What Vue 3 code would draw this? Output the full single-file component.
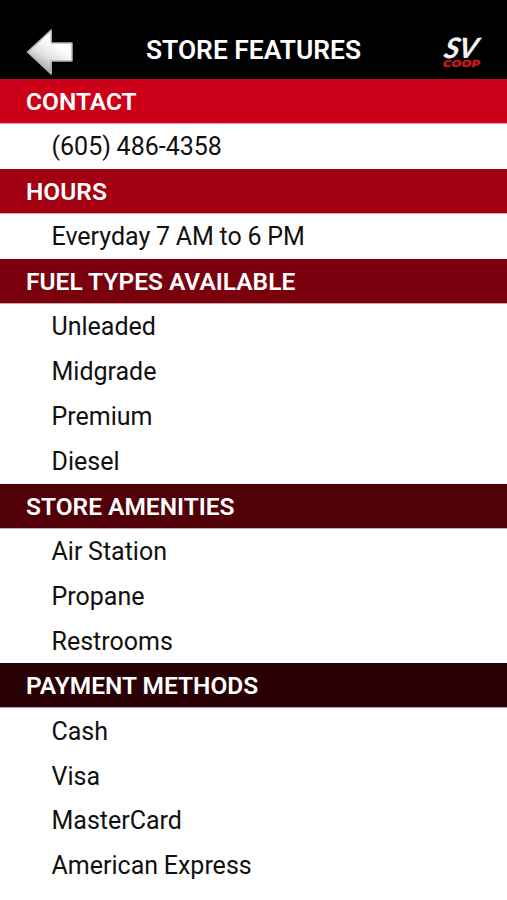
<template>
	<div class="store">
		<header class="store-header">
			<button class="back" type="button" aria-label="Back">
				<svg width="48" height="48" viewBox="0 0 48 48">
					<defs>
						<linearGradient id="arrow" x1="0.2" y1="0.9" x2="0.55" y2="0.3">
							<stop offset="0" stop-color="#999" />
							<stop offset="0.5" stop-color="#ddd" />
							<stop offset="1" stop-color="#fff" />
						</linearGradient>
					</defs>
					<path
						d="M1.5 24 L25.2 2 V15 H46 V33 H25.2 V46 Z"
						fill="url(#arrow)"
						stroke="#b5b5b5"
						stroke-width="1.5"
						stroke-linejoin="round"
					/>
				</svg>
			</button>
			<h1 class="title">STORE FEATURES</h1>
			<svg class="logo" width="54" height="50" viewBox="0 -8 54 50">
				<text class="logo-sv" x="0" y="0" textLength="33" lengthAdjust="spacingAndGlyphs" transform="translate(7 25.8) skewX(-12)">SV</text>
				<text class="logo-coop" x="7" y="34.5" textLength="37" lengthAdjust="spacingAndGlyphs">COOP</text>
			</svg>
		</header>

		<section v-for="section in sections" :key="section.title">
			<h2 class="row heading" :class="section.tone">
				<span>{{ section.title }}</span>
			</h2>
			<ul class="items">
				<li v-for="item in section.items" :key="item" class="row item">
					{{ item }}
				</li>
			</ul>
		</section>
	</div>
</template>

<script setup>
const sections = [
	{ title: 'CONTACT', tone: 'contact', items: ['(605) 486-4358'] },
	{ title: 'HOURS', tone: 'hours', items: ['Everyday 7 AM to 6 PM'] },
	{
		title: 'FUEL TYPES AVAILABLE',
		tone: 'fuel',
		items: ['Unleaded', 'Midgrade', 'Premium', 'Diesel'],
	},
	{
		title: 'STORE AMENITIES',
		tone: 'amenities',
		items: ['Air Station', 'Propane', 'Restrooms'],
	},
	{
		title: 'PAYMENT METHODS',
		tone: 'payment',
		items: ['Cash', 'Visa', 'MasterCard', 'American Express'],
	},
];
</script>

<style>
body {
	background: #fff;
}
</style>

<style scoped>
.store {
	height: 900px;
	overflow: hidden;
	background: #fff;
	font-family: Roboto, 'Liberation Sans', sans-serif;
}
.store-header {
	display: flex;
	align-items: flex-start;
	justify-content: space-between;
	box-sizing: border-box;
	height: 79.3px;
	padding: 24px 17px 0 26px;
	background: #000;
}
.back {
	width: 48px;
	height: 48px;
	margin-top: 4px;
	padding: 0;
	border: 0;
	background: none;
}
.back svg {
	display: block;
}
.title {
	margin: 11px 0 0;
	padding-right: 3px;
	color: #fff;
	font-size: 26.4px;
	font-weight: 600;
	line-height: 30px;
	white-space: nowrap;
}
.logo-sv {
	fill: #f4f4f4;
	stroke: #f4f4f4;
	stroke-width: 0.2px;
	font-family: Lato, sans-serif;
	font-size: 28px;
	font-style: italic;
	font-weight: 700;
}
.logo-coop {
	fill: #c8181e;
	stroke: #c8181e;
	stroke-width: 0.4px;
	font-family: 'DejaVu Sans', sans-serif;
	font-size: 8.5px;
	font-style: italic;
	font-weight: 700;
}
.row {
	display: flex;
	align-items: center;
	box-sizing: border-box;
	height: 44.95px;
	margin: 0;
	padding-top: 0.4px;
	white-space: nowrap;
}
.heading {
	padding-top: 0.8px;
	padding-left: 26px;
	border-bottom: 1px solid rgba(255, 255, 255, 0.65);
	color: #fff;
	font-size: 24.5px;
	font-weight: 600;
}
.items {
	margin: 0;
	padding: 0;
	list-style: none;
}
.item {
	padding-left: 51.5px;
	color: #111;
	font-size: 25px;
	word-spacing: -0.5px;
}
.contact {
	background: #cc0018;
}
.hours {
	background: #a30012;
}
.fuel {
	background: #7a000d;
}
.amenities {
	background: #510008;
}
.payment {
	background: #290004;
}
</style>
